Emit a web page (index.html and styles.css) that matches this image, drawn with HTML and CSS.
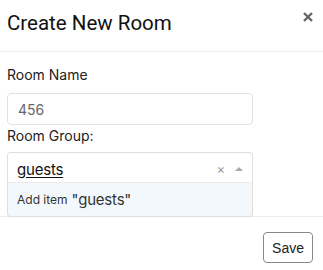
FILE: index.html
```html
<!doctype html>
<html lang="en">
  <head>
    <meta charset="UTF-8" />
    <meta name="viewport" content="width=device-width, initial-scale=1.0" />
    <title>Create New Room</title>
    <link rel="stylesheet" href="styles.css">
  </head>
  <body>
    <div class="modal">
      <div class="modal-header">
        <h2>Create New Room</h2>
        <button class="close" aria-label="Close">
          <svg width="10" height="10" viewBox="0 0 10 10">
            <path d="M1 1 L9 9 M9 1 L1 9" stroke="#666" stroke-width="2.4" stroke-linecap="butt" />
          </svg>
        </button>
      </div>

      <div class="modal-body">
        <label class="field-label" for="room-name">Room Name</label>
        <input class="text-input" id="room-name" type="text" value="456" />

        <label class="field-label group-label">Room Group:</label>
        <div class="select">
          <div class="select-inner">
            <span class="select-value">guests</span>
            <span class="select-clear">×</span>
            <span class="select-arrow"></span>
          </div>
          <div class="select-dropdown">
            <span class="add-text">Add item</span>
            <span class="add-value">"guests"</span>
          </div>
        </div>
      </div>

      <div class="modal-footer">
        <button class="btn">Save</button>
      </div>
    </div>
  </body>
</html>
```

FILE: styles.css
```css
body {
  margin: 0;
  background: #fff;
  font-family: "Inter", sans-serif;
  color: #222;
}

.modal {
  width: 323px;
  height: 270px;
  overflow: hidden;
}

.modal-header {
  display: flex;
  justify-content: space-between;
  align-items: flex-start;
  padding: 8px 10px 13px 7px;
  border-bottom: 1px solid #ececec;
}

.modal-header h2 {
  margin: 0;
  font-family: "Roboto", sans-serif;
  font-weight: 400;
  font-size: 20.5px;
  line-height: 30px;
  color: #111;
}

.close {
  border: 0;
  background: none;
  padding: 0;
  margin-top: 4px;
  width: 10px;
  height: 10px;
  line-height: 0;
  cursor: pointer;
}

.modal-body {
  padding: 12px 7px 34px;
}

.field-label {
  display: block;
  font-size: 14px;
  line-height: 21px;
  color: #222;
  margin-bottom: 8px;
}

.group-label {
  margin-bottom: 6px;
}

.text-input {
  display: block;
  box-sizing: border-box;
  width: 246px;
  height: 32px;
  margin: 0;
  padding: 0 10px;
  border: 1px solid #e2e2e2;
  border-radius: 4px;
  font-family: "Inter", sans-serif;
  font-size: 14px;
  color: #666;
  outline: none;
}

.select {
  position: relative;
  width: 246px;
}

.select-inner {
  display: flex;
  align-items: center;
  box-sizing: border-box;
  height: 30px;
  padding: 0 9px 0 9px;
  border: 1px solid #dedede;
  border-bottom: 0;
  border-radius: 4px 4px 0 0;
  background: #fff;
}

.select-value {
  flex: 1;
  font-size: 15px;
  letter-spacing: -0.2px;
  color: #111;
  text-decoration: underline;
  text-underline-offset: 2px;
  text-decoration-thickness: 1px;
  padding-top: 3px;
}

.select-clear {
  font-size: 13px;
  color: #999;
  margin-right: 10px;
  padding-top: 2px;
}

.select-arrow {
  width: 0;
  height: 0;
  border-left: 4px solid transparent;
  border-right: 4px solid transparent;
  border-bottom: 4px solid #aaa;
  margin-top: 2px;
}

.select-dropdown {
  position: absolute;
  top: 100%;
  left: 0;
  right: 0;
  z-index: 2;
  box-sizing: border-box;
  height: 35px;
  display: flex;
  align-items: center;
  gap: 4px;
  padding: 0 9px;
  background: #f3f8fc;
  border: 1px solid #dedede;
  border-top: 1px solid #ececec;
  border-radius: 0 0 4px 4px;
}

.add-text {
  font-size: 12px;
  color: #333;
}

.add-value {
  font-size: 15px;
  letter-spacing: -0.2px;
  color: #333;
}

.modal-footer {
  display: flex;
  justify-content: flex-end;
  padding: 15px 10px 7px;
  border-top: 1px solid #ececec;
}

.btn {
  box-sizing: border-box;
  height: 31px;
  padding: 0 8px;
  border: 1px solid #888;
  border-radius: 4px;
  background: #fff;
  font-family: "Liberation Sans", Arial, sans-serif;
  font-size: 14px;
  color: #222;
  cursor: pointer;
}
```
